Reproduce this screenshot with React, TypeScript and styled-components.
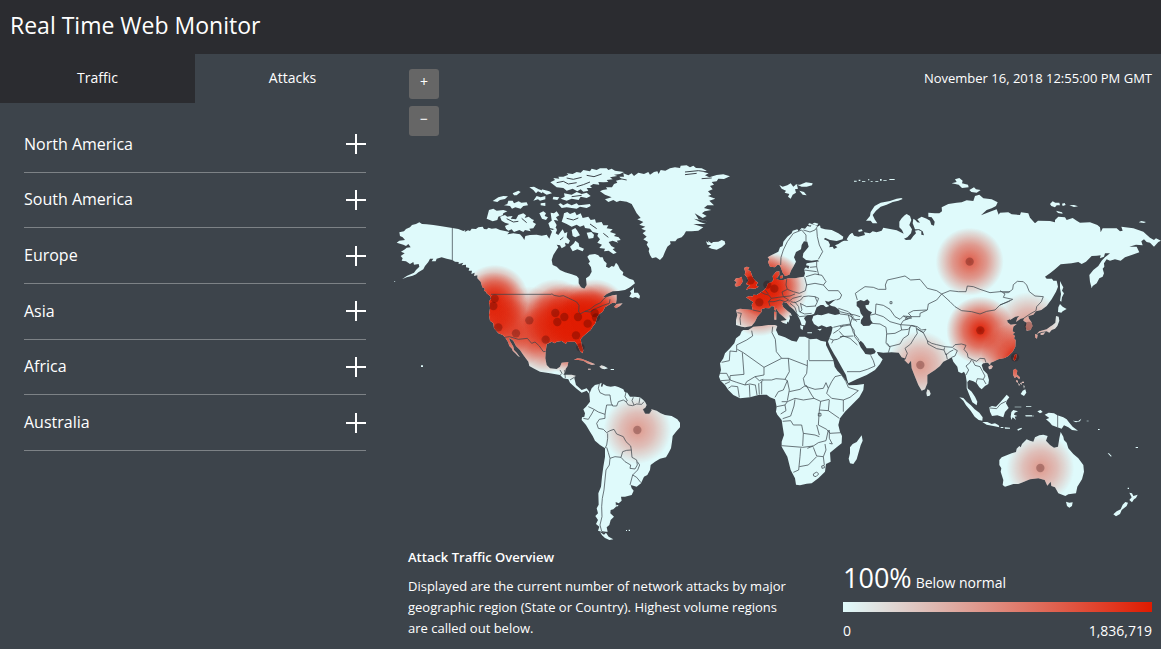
import React from "react";
import styled, { createGlobalStyle } from "styled-components";

const SEA = "#3d444b";
const LAND = "#dffafb";
const HOT = "#e01b00";

const GlobalStyle = createGlobalStyle`
  * { box-sizing: border-box; }
  body {
    margin: 0;
    background: ${SEA};
    color: #fff;
    font-family: "Open Sans", "Noto Sans", sans-serif;
    font-size: 14px;
    line-height: 21px;
  }
  h1, h2, p, ul { margin: 0; padding: 0; }
  button { font: inherit; color: inherit; border: 0; cursor: pointer; }
`;

const Page = styled.div`
  min-height: 100vh;
  display: flex;
  flex-direction: column;
`;

const Header = styled.header`
  background: #2b2c30;
  padding: 9px 10px 13px;
`;

const Title = styled.h1`
  font-size: 23px;
  line-height: 32px;
  font-weight: 400;
`;

const Body = styled.div`
  display: grid;
  grid-template-columns: 390px minmax(0, 1fr);
  flex: 1;
`;

const Tabs = styled.div`
  display: grid;
  grid-template-columns: 1fr 1fr;
`;

const Tab = styled.button<{ $active?: boolean }>`
  height: 49px;
  padding: 0 0 2px;
  background: ${(p) => (p.$active ? "transparent" : "#2b2c30")};
`;

const RegionList = styled.ul`
  list-style: none;
  display: grid;
  grid-auto-rows: 1fr;
  height: 334px;
  margin: 14px 24px 0;
`;

const RegionItem = styled.li`
  display: flex;
  border-bottom: 1px solid #7d8286;
`;

const RegionButton = styled.button`
  flex: 1;
  display: flex;
  align-items: center;
  justify-content: space-between;
  padding: 0;
  background: none;
  font-size: 16px;
`;

const Main = styled.main`
  min-width: 0;
`;

const Toolbar = styled.div`
  display: flex;
  justify-content: space-between;
  align-items: flex-start;
  padding: 15px 9px 0 19px;
`;

const ZoomControls = styled.div`
  display: flex;
  flex-direction: column;
  gap: 7px;
`;

const ZoomButton = styled.button`
  width: 30px;
  height: 30px;
  padding: 0 0 4px;
  line-height: 20px;
  border-radius: 3px;
  background: #666;
`;

const Timestamp = styled.time`
  font-size: 13px;
  line-height: 18px;
`;

const MapDrawing = styled.svg`
  display: block;
  width: 100%;
  height: auto;
`;

const Footer = styled.footer`
  display: grid;
  grid-template-columns: minmax(0, 390px) 309px;
  justify-content: space-between;
  gap: 24px;
  padding: 7px 9px 9px 18px;
`;

const Overview = styled.section`
  font-size: 13px;
`;

const OverviewTitle = styled.h2`
  font-size: 13px;
  line-height: 21px;
  font-weight: 600;
  margin-bottom: 8px;
`;

const Legend = styled.section`
  padding-top: 15px;
`;

const Percent = styled.span`
  font-size: 27px;
  line-height: 32px;
`;

const LegendStatus = styled.p`
  display: flex;
  align-items: baseline;
  gap: 4px;
`;

const LegendBar = styled.div`
  height: 10px;
  margin: 8px 0;
  background: linear-gradient(to right, ${LAND}, ${HOT});
`;

const LegendScale = styled.div`
  display: flex;
  justify-content: space-between;
`;

const regions = ["North America", "South America", "Europe", "Asia", "Africa", "Australia"];

/* Outlines are drawn at three units to the pixel, one sheet per origin. */
const sheet = (x: number, y: number) => `translate(${x} ${y}) scale(0.33333)`;
const AMERICA = sheet(390, 150);
const ATLANTIC = sheet(570, 150);
const SOUTH = sheet(540, 370);
const EUROPE = sheet(700, 170);
const AFRICA = sheet(700, 310);
const SIBERIA = sheet(840, 170);
const FAR_EAST = sheet(1000, 170);
const INDIA = sheet(840, 320);
const OCEANIA = sheet(950, 370);

const land: [string, string][] = [
  [
    AMERICA,
    `M88,217 L96,222 110,223 130,225 150,228 187,234 205,237 220,243 226,240 224,246 234,241 240,243 245,236 258,237 265,232 278,230 282,237 290,238 296,233 305,236 318,235 330,240 345,243 358,246 352,253 370,250 390,253 398,262 403,270 406,258 420,255 440,254 455,257 470,254 478,266 482,255 486,245 480,238 488,240 498,233 501,240 497,250 505,255 512,245 518,238 524,250 532,246 530,262 540,272 535,282 525,278 527,288 515,295 510,286 500,284 505,292 498,302 490,315 485,330 488,345 500,350 510,360 525,367 545,373 560,378 566,385 566,400 573,412 583,416 590,405 588,385 598,378 605,365 603,352 595,340 600,335 592,320 598,314 615,312 625,316 630,322 638,322 642,332 650,340 648,350 657,354 665,348 672,350 678,338 684,345 690,358 700,367 698,375 710,382 718,386 730,390 735,400 720,412 705,420 685,423 668,424 650,432 638,442 655,440 668,436 680,434 680,448 678,460 668,458 660,463 645,472 638,485 628,492 622,500 620,508 616,520 608,530 602,540 590,550 578,560 572,568 575,585 580,600 578,610 570,603 562,585 555,575 540,575 530,576 528,582 515,573 500,575 495,580 485,575 470,583 467,605 466,625 470,645 480,655 500,657 510,650 515,638 535,636 533,648 527,657 525,668 520,674 545,674 557,677 553,685 558,705 575,720 590,715 598,725 598,732 590,722 575,728 558,715 540,698 535,688 520,685 510,675 480,670 450,665 430,655 418,648 415,635 400,615 390,600 378,588 370,572 358,563 358,570 370,590 372,600 380,608 390,622 384,618 376,610 368,602 366,596 358,588 354,576 345,562 338,555 325,550 312,535 310,520 300,512 297,495 300,475 297,455 303,445 297,432 306,437 302,430 290,426 282,422 285,416 277,412 272,395 262,385 262,376 252,378 254,368 244,372 246,362 236,362 238,354 228,352 228,344 215,346 220,338 206,342 206,336 195,335 187,330 170,326 155,322 140,326 137,334 125,334 130,326 120,326 115,336 105,348 100,358 85,367 78,373 68,377 50,382 36,388 50,378 72,368 78,360 88,350 86,342 72,344 70,336 60,342 48,334 35,332 38,325 32,318 44,310 33,305 45,298 50,293 62,292 55,282 48,288 40,284 20,278 28,272 45,270 38,262 30,258 28,247 42,244 48,237 60,232 66,225 78,222Z
     M330,200 L345,195 352,200 368,198 362,206 378,208 385,195 400,190 408,196 404,204 416,200 426,208 432,210 428,216 438,222 430,235 418,236 422,244 405,240 400,246 388,240 372,246 365,238 355,242 348,236 345,228 358,222 345,218 335,212Z
     M297,180 L310,176 320,182 340,180 352,184 340,190 338,196 325,200 322,210 308,214 290,206Z
     M308,153 L325,142 340,138 354,139 345,147 330,150 322,156Z
     M342,166 L352,162 355,152 368,152 372,160 386,154 394,158 410,157 414,166 400,168 392,176 376,172 366,176 360,168Z
     M368,130 L385,122 392,126 380,136 372,136Z
     M418,112 L432,110 446,118 460,122 456,130 444,124 438,130 430,120Z
     M440,138 L452,142 466,138 466,148 450,152 444,148 430,152Z
     M452,160 L466,158 466,168 452,166Z
     M455,118 L478,124 486,130 470,134 460,128Z
     M505,163 L512,160 520,166 532,160 545,166 560,160 566,166 582,164 600,162 602,168 590,174 570,170 560,176 530,172 515,174Z
     M481,97 L495,90 490,84 508,86 505,80 520,80 535,74 530,70 548,72 560,66 572,68 580,60 600,64 605,56 620,60 630,55 650,55 655,60 665,56 675,62 702,66 690,72 672,74 682,78 660,82 668,88 650,90 655,96 640,97 625,96 628,104 610,102 600,108 606,114 590,114 595,122 580,125 572,118 562,124 548,116 530,122 520,114 500,112Z
     M522,130 L545,134 560,126 575,132 590,128 602,138 590,144 572,140 566,150 545,146 530,152 512,146 524,140Z
     M490,140 L508,142 502,150 488,148Z
     M515,215 L520,200 522,190 532,186 540,192 555,186 560,196 572,190 578,204 595,200 602,210 615,208 618,218 635,216 640,226 655,226 650,235 668,238 660,246 678,252 672,258 686,262 692,270 680,272 685,278 668,272 656,276 664,288 675,294 668,298 680,308 670,312 656,302 642,304 645,296 628,294 636,284 622,278 630,268 622,258 625,250 608,246 600,236 585,234 582,226 570,230 560,224 545,230 530,222Z
     M448,190 L460,184 468,190 464,198 474,202 468,210 456,206Z
     M482,188 L492,190 500,184 508,196 498,202 505,212 494,210 486,216 484,204Z
     M475,220 L490,208 500,225 495,238 480,234Z
     M540,290 L552,280 556,272 566,280 568,290 582,296 578,304 562,298 548,304Z
     M545,240 L556,234 562,242 570,256 556,262 548,258Z
     M590,248 L604,246 612,254 610,264 596,266Z
     M93,646h6v5h-6z M12,393l5,2 -4,1z
     M285,419 L298,427 308,436 300,438 290,430Z`,
  ],
  [
    ATLANTIC,
    `M90,124 L98,120 112,118 108,112 126,112 132,102 142,98 138,92 155,88 148,80 162,80 160,70 175,76 185,70 192,78 205,68 222,72 235,66 240,74 252,66 262,64 266,72 272,60 286,62 300,55 315,52 330,54 332,47 350,46 360,52 370,47 378,54 395,55 410,62 400,66 416,70 405,76 418,82 440,75 460,73 480,79 462,87 445,86 440,94 425,96 432,104 420,108 428,118 414,124 424,134 414,138 436,146 418,152 432,166 412,166 402,174 424,180 404,184 396,190 410,198 398,204 374,190 386,208 412,214 372,206 390,216 408,222 370,222 400,232 385,242 365,244 348,244 342,254 335,262 322,266 316,274 300,274 302,282 292,290 285,305 279,320 270,330 258,322 246,325 240,315 236,304 238,296 230,284 234,276 220,268 230,260 218,250 228,242 214,236 226,230 208,224 220,216 202,208 212,204 200,190 192,175 185,162 170,155 150,152 140,156 130,150 115,156 105,148 125,142 105,134Z
     M408,274 L416,278 414,272 424,280 430,276 445,275 455,270 464,274 466,282 455,292 440,299 425,296 415,292 424,286 412,284Z
     M178,440 L184,430 180,424 188,418 192,412 192,428 204,428 210,438 208,446 196,441 188,444Z
     M132,470 L140,462 158,460 150,468 138,475Z
     M12,630 L22,625 34,626 50,632 76,643 66,645 52,640 40,632 26,630Z
     M88,650 L94,646 102,648 114,655 104,658 96,656Z M122,657h10v3h-10z M54,656h8v3h-8z`,
  ],
  [
    SOUTH,
    `M148,72 L155,55 165,45 178,42 185,38 183,48 186,52 190,42 200,48 212,50 225,48 235,51 250,58 254,66 262,68 270,80 285,80 300,82 310,90 315,95 320,105 314,118 330,122 335,118 350,122 362,130 375,135 395,138 412,148 420,158 420,172 408,185 398,198 396,215 393,235 386,248 378,262 360,266 345,275 332,285 330,300 322,315 312,320 303,340 290,350 272,345 275,355 281,362 275,375 255,380 243,380 245,392 236,400 227,396 228,410 220,418 212,420 211,430 222,440 212,450 208,465 200,472 203,485 190,487 174,482 178,470 168,462 174,450 166,438 174,430 170,415 176,404 175,370 183,350 186,320 190,290 195,260 195,235 180,225 165,212 158,198 150,185 138,165 125,150 126,142 133,140 135,130 130,118 138,110 150,95Z
     M180,486 L192,494 198,488 206,500 220,508 208,510 195,504 186,496Z M228,404l8,2 -6,5z M258,480h3v3h-3z M266,479h4v4h-4z`,
  ],
  [
    EUROPE,
    `M345,164 L352,170 360,166 362,174 375,178 395,180 415,190 430,200 428,208 410,213 390,210 375,203 372,208 385,214 390,224 388,232 398,230 402,237 412,232 405,226 415,222 425,215 432,212 445,212 440,208 448,195 455,190 462,197 475,200 495,195 492,187 510,190 518,184 530,187 545,182 550,173 570,177 590,181 611,191 606,180 598,172 598,155 605,145 614,136 620,132 630,138 634,150 628,165 636,178 633,190 622,202 612,206 618,210 632,209 640,198 648,190 645,182 655,180 664,184 664,194 672,196 668,184 658,178 645,178 638,160 640,146 646,150 652,157 660,158 652,148 665,140 680,146 690,152 694,164 702,167 704,155 695,142 685,140 685,128 705,130 718,130 726,124 725,112 745,102 770,98 785,97 800,91 820,93 825,78 838,74 850,85 875,88 893,97 888,108 875,115 860,120 843,136 868,126 890,118 896,134 900,128 925,127 935,133 960,135 963,127 985,130 990,143 1005,160 1014,152 1050,153 1065,157 1065,150 1075,140 1095,142 1100,150 1118,144 1130,152 1140,158 1170,157 1192,165 1200,172 1202,187 1208,175 1250,175 1260,184 1268,182 1264,170 1300,175 1330,185 1350,203 1362,210 1368,205 1383,212 1375,216 1362,230 1350,218 1340,216 1332,208 1324,214 1328,226 1308,224 1288,230 1310,230 1318,247 1295,255 1275,262 1262,272 1245,268 1230,272 1220,268 1212,280 1213,290 1208,296 1212,310 1208,320 1198,325 1190,340 1178,348 1175,355 1170,335 1168,315 1180,300 1195,288 1205,272 1215,262 1230,250 1215,250 1212,260 1200,265 1202,256 1190,257 1175,258 1158,275 1145,282 1135,276 1115,280 1082,283 1065,298 1050,310 1035,320 1040,326 1056,326 1060,332 1070,332 1074,350 1068,365 1055,388 1040,408 1024,420 1008,424 1000,434 985,438 987,446 994,456 998,468 992,480 980,482 977,470 980,458 970,452 972,444 962,446 948,456 952,444 958,438 946,440 930,450 922,456 932,464 950,462 940,470 938,484 945,488 938,492 945,498 942,505 947,510 946,530 938,545 925,558 914,564 895,568 880,575 872,578 870,586 864,578 850,580 845,585 850,600 862,612 867,630 865,642 855,648 845,658 838,652 830,640 820,634 808,630 802,636 803,655 815,665 825,680 832,695 830,706 817,697 808,675 800,655 800,635 797,615 792,605 785,610 775,605 772,590 760,575 755,562 745,568 730,575 720,588 705,600 682,615 682,640 675,658 665,662 655,645 645,620 635,595 633,572 625,582 613,570 618,566 605,562 596,548 575,547 550,548 528,545 520,535 500,535 490,520 482,512 476,518 482,532 492,545 496,552 512,554 525,550 528,540 535,555 548,568 540,582 525,600 500,615 470,628 445,640 441,628 438,615 425,592 410,565 402,552 390,530 384,515 388,505 394,490 398,472 392,468 380,472 365,466 355,470 342,462 336,450 340,438 352,434 365,436 385,430 405,435 420,432 418,420 405,410 395,408 388,404 402,392 412,388 400,390 385,395 375,392 380,402 388,408 378,412 370,405 362,405 350,412 345,425 342,432 335,434 320,436 312,445 318,455 315,466 305,465 300,450 295,440 290,430 280,418 268,408 260,398 250,396 246,402 250,412 262,422 272,430 276,438 268,436 270,445 265,458 260,450 250,440 238,430 228,415 225,410 215,408 208,415 196,414 184,418 185,425 172,440 165,455 155,468 135,472 125,470 108,465 108,450 112,435 108,420 120,416 150,419 158,420 155,405 160,396 150,390 138,382 150,378 158,380 160,374 170,375 185,365 195,358 200,350 204,340 215,336 220,330 218,318 228,305 238,304 238,315 230,325 236,330 250,330 265,325 285,325 300,322 312,320 315,310 312,298 318,292 325,296 328,288 318,286 320,280 340,277 358,274 352,270 335,272 318,270 308,262 310,250 318,240 326,230 322,215 312,214 305,225 303,238 288,246 282,262 288,275 280,290 274,300 268,314 255,318 248,308 242,292 238,285 232,285 225,292 210,290 204,276 208,268 203,262 215,255 235,245 240,232 248,228 250,215 262,200 275,190 278,182 292,178 296,184 305,174 315,176 322,168 332,170 335,162Z
     M132,294 L140,290 148,292 144,300 152,304 155,314 160,325 166,332 174,338 168,346 176,350 165,356 150,355 138,360 144,350 150,347 138,342 145,332 140,320 134,314 136,306Z
     M108,325 L118,324 125,320 128,335 120,347 108,350 104,345 110,336 103,332Z
     M238,45 L248,50 262,46 272,40 280,50 290,42 294,56 285,58 288,68 278,74 272,86 264,80 268,72 254,68 258,62 245,56Z
     M285,42 L300,44 318,37 338,40 336,46 320,50 305,50Z M298,62 L312,66 320,76 308,74Z
     M222,425h7v24h-6z M223,408l5,2 -1,12 -5,-3z M242,453 L264,449 260,462 248,458Z M352,478l14,-2 -6,6z M322,487h14v3h-14z M240,318l9,-2 -2,9 -7,0z
     M324,163l4,-3 8,2 -6,5z M337,160l8,-2 10,3 -4,6z M300,466 l10,2 -2,12 -6,-4z`,
  ],
  [
    AFRICA,
    `M130,60 L145,60 160,50 185,48 205,45 225,45 232,48 228,60 235,75 255,82 275,92 290,95 298,80 315,80 330,88 350,86 362,92 378,95 378,105 390,130 400,150 404,170 412,182 425,195 440,215 446,226 470,225 492,222 490,240 478,262 455,285 435,305 420,325 415,345 420,365 426,378 425,400 410,412 390,428 392,455 378,462 375,485 355,505 335,520 320,521 300,526 288,524 285,505 272,480 262,440 245,410 245,395 252,375 248,350 245,330 232,314 228,305 230,290 225,268 210,262 200,254 175,255 150,262 120,265 100,255 85,240 75,225 62,212 57,200 63,180 60,160 70,145 75,130 90,115 103,100 108,85 120,76 125,64Z
     M485,376 L488,392 482,406 470,448 460,462 450,460 446,446 450,430 450,412 458,402 470,396Z`,
  ],
  [
    SIBERIA,
    `M188,87 L175,92 158,96 140,104 122,110 108,122 98,135 104,148 112,160 98,160 92,152 78,152 90,138 92,126 104,108 122,98 150,93 170,86 184,84Z
     M335,40 L350,36 345,28 358,24 368,32 366,40 384,44 386,52 366,54 356,44Z M388,60 L402,52 408,58 422,60 410,68 394,66Z
     M55,180l10,-2 3,5 -12,3z M30,193l8,-4 4,10 -8,4z
     M42,32h8v3h-8z M56,29h5v4h-5z M66,33h10v2h-10z M84,28h4v3h-4z M92,33h6v2h-6z M106,34h9v2h-9z M120,27h5v5h-5z M130,30h10v2h-10z M148,27h16v3h-16z`,
  ],
  [
    FAR_EAST,
    `M150,102 L158,94 166,98 178,98 180,106 170,106 165,112 154,108Z M186,101l8,-2 3,6 -9,3z M208,106 L222,105 234,109 222,111Z M168,122 L186,127 188,131 174,129Z M416,157l8,-4 14,3 -6,3z
     M180,333 L186,345 190,352 186,362 192,370 186,382 184,395 180,392 183,372 180,355Z
     M175,412 L180,402 188,410 200,417 188,424 184,428 174,426Z
     M168,438 L176,440 178,452 172,468 165,476 155,480 148,488 140,484 124,486 110,492 118,484 140,478 150,470 158,465 166,458Z
     M105,492 L113,494 111,506 106,503Z M122,489l14,-2 -6,7 -8,1z`,
  ],
  [
    INDIA,
    `M520,118 L524,104 531,102 528,116 523,123Z M445,140l8,-5 6,4 -5,8 -7,1z
     M520,150 L526,146 532,152 530,163 540,172 538,178 530,170 524,174 519,164Z M528,180l6,2 0,6 -5,-2z M540,190l5,-3 0,8z M550,196l4,2 -2,8z
     M542,222 L548,212 556,208 559,218 552,228Z M534,188l6,6 -3,4z M546,185h6v4h-6z
     M262,208l6,3 4,10 -3,6 -8,2 -2,-10z
     M358,232 L370,234 380,245 392,255 404,268 418,278 428,292 427,302 416,300 404,290 392,272 378,256 370,242Z
     M427,306 L442,306 455,312 465,310 476,316 478,322 460,318 440,314Z M482,321h8v3h-8z M494,322l16,1 0,3 -15,0z M532,328l12,-5 2,3 -12,6z
     M448,262 L456,258 468,260 478,250 490,236 500,224 508,232 500,242 498,250 506,264 495,276 490,292 472,286 456,288 450,275Z
     M514,276 L520,270 534,274 524,278 522,284 532,288 524,290 528,300 518,292 514,300 512,290Z M524,260h20v2h-20z M558,259h16v2h-16z M556,286h20v3h-20z`,
  ],
  [
    OCEANIA,
    `M262,124 L272,120 278,126 270,130Z M284,134 L296,128 312,130 322,136 340,142 350,148 358,158 368,170 384,182 366,180 355,172 342,166 335,176 318,170 306,166 300,158 288,148 298,144Z M368,152 L384,154 394,146 390,154 378,157Z M228,137h24v2h-24z M410,152h6v2h-6z M444,177h5v3h-5z
     M148,270 L155,262 170,256 185,250 198,246 200,236 208,228 212,232 216,222 230,208 240,212 250,215 255,202 268,196 280,194 293,198 288,212 300,225 312,233 324,230 328,205 332,186 340,200 342,210 350,218 355,235 370,252 385,265 400,285 402,305 396,328 382,350 378,370 355,373 346,378 325,370 315,352 304,348 302,335 292,347 284,330 265,325 240,328 215,338 205,342 190,342 165,350 158,345 160,330 152,305 154,295 148,285Z
     M348,395 L358,398 368,397 366,408 358,413 351,408Z M533,353h4v4h-4z
     M538,368 L546,370 550,378 563,374 558,384 552,388 546,397 538,390 545,382Z M526,396 L534,398 530,408 515,420 510,432 498,439 490,433 500,424 512,418 518,404Z
     M557,231h7v3h-7z M473,250l4,0 8,8 -2,2z`,
  ],
];

const water: [string, string][] = [
  [SIBERIA, "M50,395 L62,390 72,394 82,388 89,395 86,404 76,406 78,414 86,422 96,427 90,436 92,450 98,458 88,467 70,468 62,460 63,450 70,440 62,430 58,415 50,408Z M500,452l10,-4 0,12z"],
  [EUROPE, "M368,410 L390,416 408,421 404,428 380,426 362,430 348,430 352,418Z"],
  [SOUTH, "M310,118 L322,112 334,120 328,130 316,130Z"],
];

const channels: [string, string][] = [
  [
    AMERICA,
    "M500,98L520,94 535,102 560,98 M530,84L550,88 575,82 M560,110L580,104 600,96 M590,76L612,80 635,72 M545,140L575,136 M350,206L370,216 385,214 M395,205L410,218 M530,205L550,210 565,204 M600,222L620,236 M640,250L655,262 M510,270L520,262",
  ],
  [ATLANTIC, "M345,66L385,62 415,66 M345,74L380,70 M395,86L425,84 M150,86L170,90"],
];

const borders: [string, string][] = [
  [
    AMERICA,
    `M187,234V330 M303,433H485 M485,431L492,436 508,439 520,437 535,444 548,450 560,456 567,466 566,486 572,491 585,484 600,478 615,466 632,458 640,448 655,436 M585,484L600,486 612,478 640,466 658,460 660,448
     M345,562L358,560 385,568 412,565 425,580 435,576 448,588 460,605 467,604 M510,660L516,670 508,678 M524,660L526,684 M540,690L556,680`,
  ],
  [
    SOUTH,
    `M178,42L175,55 180,68 195,75 210,75 212,90 214,100 218,108 230,108 235,95 250,90 258,95 M258,66L255,80 262,92 258,95 265,105 278,107 290,102 305,103 312,95 M280,82L276,92 282,105 M300,82L297,100
     M218,105L200,105 197,120 195,135 M145,110L160,117 175,126 195,133 M130,145L145,148 155,132 162,119 M195,135V145L178,148 170,160 175,175 190,178 200,188 210,182 222,178 230,192 250,200 258,215 272,228 274,240
     M203,190L203,205 200,225 195,235 M200,232L205,248 210,265 225,260 243,262 248,245 260,241 274,240 276,262 290,270 292,285 285,297 270,295 272,285 255,275 243,262 M292,275L299,285 293,300 278,315 270,345 M278,315L290,322 303,338
     M210,265L208,285 198,300 195,330 192,360 187,385 185,410 186,440 180,465 185,484 200,487 M310,118L322,112 334,120 328,130 316,130Z`,
  ],
  [
    EUROPE,
    `M112,428L124,430 120,445 122,465 M158,420L182,425 M182,366L194,372 206,375 214,385 206,395 210,408 M196,360L205,372 M214,385L235,382 250,380 246,366 262,358 258,345 260,328 M262,358L280,365 298,370 316,362 320,345 314,322 M206,395L222,395 240,390 255,395 266,390 250,380 270,378 285,372
     M266,395L278,385 305,378 M272,395L285,398 302,390 310,380 325,378 345,380 352,396 346,408 M300,400L320,410 348,408 M284,395L296,410 298,425 314,432 M270,400L285,412 290,428 M302,402L306,420 300,426 M314,432L335,430 M290,430L298,440 318,438
     M242,285L243,262 250,240 262,215 280,190 305,180 318,195 318,215 M310,180L330,186 345,180 352,170 M350,175L352,200 358,225 368,245 355,268 M330,292L350,290 350,275 M312,300L350,305 M350,290L356,315 M318,320L345,312 366,316 378,335 370,345 345,340 318,345 M370,345L385,362 415,362 425,375 420,386 410,390
     M345,380L356,385 352,395 M420,432L445,435 452,462 425,466 400,472 M415,415L445,425 460,440 M445,435L462,445 470,455 M228,326L236,326
     M400,490L415,480 430,466 M400,510L412,508 430,498 450,505 472,525 M388,506L400,510 395,520 M452,462L460,488 474,505 478,512 M430,498L418,484 M441,605L480,605 502,598 525,588 520,572 512,556`,
  ],
  [
    AFRICA,
    `M155,62L158,78 140,90 110,105 M110,105L110,125 90,123 88,152 65,157 M112,118L130,128 192,172 245,145 265,145 322,167 M127,128L132,193 90,197 M218,50L216,68 226,88 229,125 245,145 M327,88L327,150 M327,152H402 M322,150V167L320,190 310,205 314,225
     M265,145L268,185 255,208 228,206 215,210 190,210 180,220 M192,172V195L165,200 140,215 135,225 M60,190L80,190 90,210 62,212 M90,198V210L110,217 135,225 150,222 165,225 M165,200L178,212 190,208 M113,230L118,262 M148,225L150,262 M166,224L171,255 M176,220L178,254 M185,215V253 M85,235L95,228 113,230 M75,222L90,215
     M225,262L235,245 250,240 262,212 255,208 M262,212L268,240 262,272 M268,245L300,238 318,225 335,255 342,265 310,270 285,265 262,275 245,275 M314,228L345,238 370,235 378,218 385,235 M385,235L395,215 405,200 425,195 438,215 M385,235L380,250 395,265 430,270 450,262 475,242 445,232 438,215 M430,270V305
     M342,265L362,274 388,268 M362,274L358,300 385,302 388,270 M385,302L418,325 M358,300L355,345 380,358 390,370 424,368 M355,310h8v8h-8z M248,334L272,332 280,345 305,345 310,370 345,375 358,380 M350,345L358,375 M248,326L272,318 282,288 285,268 M230,290L255,285 M242,312L258,302 255,285 262,275
     M310,370L308,408 M245,407L308,412 340,408 M322,415L340,408 355,398 378,392 385,360 M340,412L350,438 370,440 378,420 375,402 M302,415L300,440 296,480 280,487 M298,470L325,465 350,440 M370,440L373,465 M388,360L388,385 397,402 388,400 M340,492L350,486 356,492 348,500 341,498Z M365,468l7,-2 2,7 -8,2z`,
  ],
  [
    SIBERIA,
    `M52,390L46,370 60,360 75,350 100,352 115,358 138,358 136,345 142,330 165,325 195,318 212,330 240,328 262,355 290,362 305,372 290,390 265,402 262,420 240,430 240,440 215,440 190,438 180,448 165,440 150,418 130,406 108,402 106,432 88,436
     M305,372L330,362 355,365 378,365 382,348 400,350 420,358 450,368 480,365 510,365 M510,392L480,405 465,420 440,424 420,432 395,425 365,422 345,410 330,395 305,372
     M95,460L120,462 138,472 140,490 138,520 148,530 M106,432L130,440 150,455 182,464 185,480 165,490 140,492 M190,438L205,446 190,452 182,464 210,466 226,470 M215,440L205,430 220,422 260,420 M200,440L215,444 196,448Z M150,395h6v6h-6z
     M185,480L205,478 215,466 232,470 245,480 258,478 250,488 232,478 M210,470L205,495 190,505 180,522 148,530 M0,425L20,430 45,435 60,440 M30,430L40,450 60,448 M0,470L30,465 42,480 44,500 60,520 M30,465L36,445`,
  ],
  [FAR_EAST, "M0,362L15,372 10,382 38,388 25,395 0,405 M10,368L25,368 38,358 40,344 52,334 70,335 80,345 88,365 105,378 130,380 124,395 110,410 108,422 90,432 68,447"],
  [
    INDIA,
    `M228,20L232,40 222,55 212,72 195,85 202,100 195,118 M230,25L250,38 262,62 275,70 290,74 315,80 338,82 M262,62L264,72 290,86 312,90 314,82 M312,90L318,105 330,95 340,90 M318,100L322,118 M338,82L345,74 365,72 378,76 372,88 382,100 384,112 395,118 M340,85L352,92 345,108 335,112
     M378,165L386,150 378,138 390,128 395,118 410,124 420,115 434,116 438,128 M398,122L405,136 420,140 428,155 435,168 430,178 412,176 408,190 M430,178L438,192 M450,264L470,266 482,252 498,244 M142,70L150,82 145,98 M0,50L40,48`,
  ],
  [OCEANIA, "M323,135V172"],
];

type Dot = [string, number, number, number];

/* sheet, x, y, intensity */
const attacks: Dot[] = [
  [AMERICA, 314, 446, 0.85],
  [AMERICA, 310, 468, 0.85],
  [AMERICA, 325, 532, 0.8],
  [AMERICA, 378, 550, 0.5],
  [AMERICA, 418, 511, 0.5],
  [AMERICA, 467, 569, 0.8],
  [AMERICA, 496, 489, 0.7],
  [AMERICA, 523, 501, 0.7],
  [AMERICA, 502, 516, 0.7],
  [AMERICA, 564, 501, 0.85],
  [AMERICA, 593, 521, 0.85],
  [AMERICA, 558, 556, 0.85],
  [AMERICA, 571, 592, 0.7],
  [AMERICA, 614, 489, 0.85],
  [AMERICA, 618, 502, 0.8],
  [SOUTH, 292, 180, 0.44],
  [EUROPE, 152, 331, 0.85],
  [EUROPE, 202, 344, 0.85],
  [EUROPE, 223, 356, 0.8],
  [EUROPE, 178, 397, 0.85],
  [SIBERIA, 389, 275, 0.72],
  [SIBERIA, 421, 481, 1],
  [INDIA, 241, 135, 0.44],
  [INDIA, 525, 112, 1],
  [FAR_EAST, 86, 468, 0.45],
  [OCEANIA, 271, 294, 0.44],
];

function WorldMap() {
  return (
    <MapDrawing viewBox="390 136 771 404" role="img" aria-label="World map of network attacks">
      <defs>
        <g id="land">
          {land.map(([transform, d]) => (
            <path key={transform} transform={transform} d={d} />
          ))}
        </g>
        <mask id="landMask" maskUnits="userSpaceOnUse" x="390" y="136" width="771" height="414">
          <use href="#land" fill="#fff" />
        </mask>
        <radialGradient id="heat">
          <stop offset="0" stopColor={HOT} stopOpacity="1" />
          <stop offset="0.5" stopColor={HOT} stopOpacity="0.6" />
          <stop offset="1" stopColor={HOT} stopOpacity="0" />
        </radialGradient>
      </defs>
      <use href="#land" fill={LAND} />
      <g mask="url(#landMask)">
        {attacks.map(([transform, x, y, power], i) => (
          <circle key={i} transform={transform} cx={x} cy={y} r="102" fill="url(#heat)" opacity={power} />
        ))}
      </g>
      {water.map(([transform, d], i) => (
        <path key={i} transform={transform} d={d} fill={SEA} />
      ))}
      {channels.map(([transform, d], i) => (
        <path key={i} transform={transform} d={d} fill="none" stroke={SEA} strokeWidth="3" />
      ))}
      {borders.map(([transform, d], i) => (
        <path key={i} transform={transform} d={d} fill="none" stroke={SEA} strokeWidth="2.2" strokeLinejoin="round" />
      ))}
      {attacks.map(([transform, x, y], i) => (
        <circle key={i} transform={transform} cx={x} cy={y} r="12.5" fill="#2a0000" opacity="0.28" />
      ))}
    </MapDrawing>
  );
}

function PlusIcon() {
  return (
    <svg width="20" height="20" viewBox="0 0 20 20" aria-hidden="true">
      <path d="M10 0V20M0 10H20" stroke="#fff" strokeWidth="2" />
    </svg>
  );
}

export default function App() {
  return (
    <Page>
      <GlobalStyle />
      <Header>
        <Title>Real Time Web Monitor</Title>
      </Header>
      <Body>
        <aside>
          <Tabs role="tablist">
            <Tab role="tab" aria-selected="false">Traffic</Tab>
            <Tab role="tab" aria-selected="true" $active>Attacks</Tab>
          </Tabs>
          <RegionList>
            {regions.map((name) => (
              <RegionItem key={name}>
                <RegionButton aria-expanded="false">
                  {name}
                  <PlusIcon />
                </RegionButton>
              </RegionItem>
            ))}
          </RegionList>
        </aside>
        <Main>
          <Toolbar>
            <ZoomControls>
              <ZoomButton aria-label="Zoom in">+</ZoomButton>
              <ZoomButton aria-label="Zoom out">−</ZoomButton>
            </ZoomControls>
            <Timestamp dateTime="2018-11-16T12:55:00Z">November 16, 2018 12:55:00 PM GMT</Timestamp>
          </Toolbar>
          <WorldMap />
          <Footer>
            <Overview>
              <OverviewTitle>Attack Traffic Overview</OverviewTitle>
              <p>
                Displayed are the current number of network attacks by major geographic region
                (State or Country). Highest volume regions are called out below.
              </p>
            </Overview>
            <Legend>
              <LegendStatus>
                <Percent>100%</Percent>
                <span>Below normal</span>
              </LegendStatus>
              <LegendBar />
              <LegendScale>
                <span>0</span>
                <span>1,836,719</span>
              </LegendScale>
            </Legend>
          </Footer>
        </Main>
      </Body>
    </Page>
  );
}
